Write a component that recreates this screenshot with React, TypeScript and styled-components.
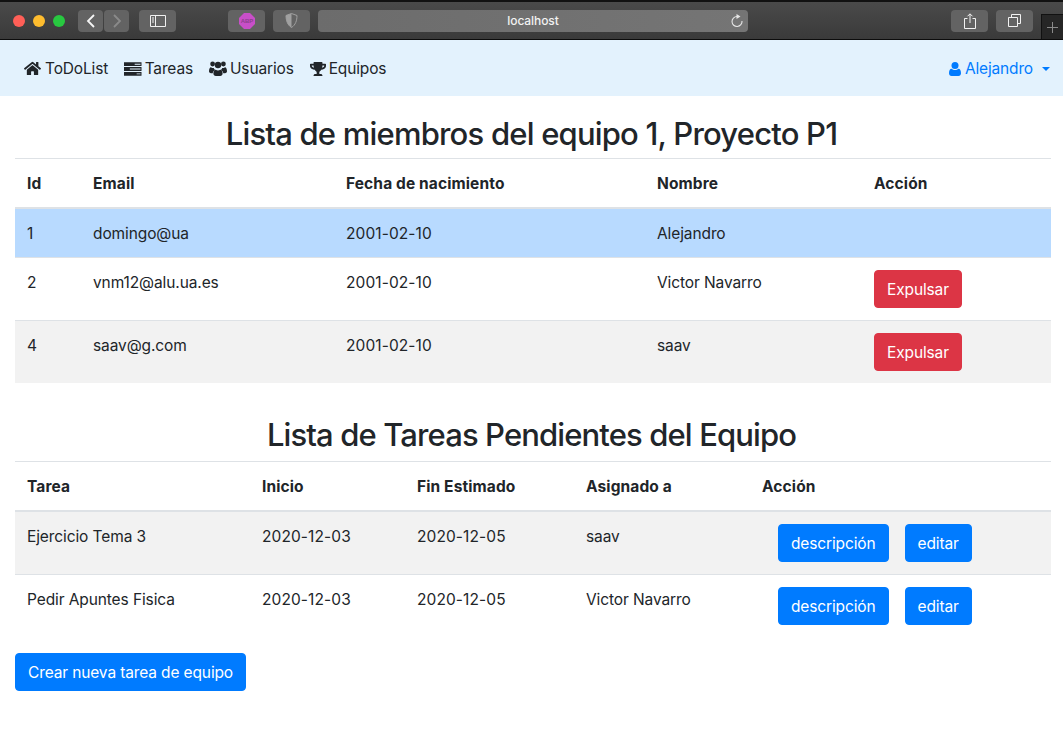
import React from 'react'
import styled, { createGlobalStyle } from 'styled-components'
import { FaHome, FaTrophy } from 'react-icons/fa'

const GlobalStyle = createGlobalStyle`
  html, body {
    margin: 0;
    padding: 0;
    background: #fff;
    font-family: Inter, "Liberation Sans", sans-serif;
    font-size: 15.5px;
    line-height: 24px;
    letter-spacing: -0.1px;
    color: #212529;
  }
  * {
    box-sizing: border-box;
  }
`

const TitleBar = styled.div`
  height: 40px;
  background: linear-gradient(#4a4a4a, #3a3a3a);
  border-top: 2px solid #111;
  border-bottom: 1px solid #0c0c0c;
  display: flex;
  align-items: center;
  padding: 0 0 0 13px;
`

const Light = styled.span<{ $color: string }>`
  width: 12px;
  height: 12px;
  border-radius: 50%;
  background: ${p => p.$color};
  margin-right: 8px;
`

const ToolButton = styled.div<{ $width: number; $left?: number }>`
  width: ${p => p.$width}px;
  height: 22px;
  margin-left: ${p => p.$left ?? 0}px;
  border-radius: 4px;
  background: #636363;
  display: flex;
  align-items: center;
  justify-content: center;
  flex-shrink: 0;
`

const AddressBar = styled(ToolButton)`
  background: linear-gradient(90deg, #6c6c6c, #757575);
  position: relative;
  color: #f2f2f2;
  font-size: 12px;
  font-weight: 500;
`

const ReloadIcon = styled.svg`
  position: absolute;
  right: 4px;
  top: 4px;
`

const BlockerText = styled.text`
  font-family: "Liberation Sans", sans-serif;
  font-size: 6px;
  font-weight: 700;
  letter-spacing: 0;
  fill: #8c3f8c;
`

const NewTab = styled.div`
  width: 22px;
  height: 25px;
  margin-left: auto;
  align-self: flex-end;
  background: #262626;
  border-left: 1px solid #111;
  border-top: 1px solid #111;
  display: flex;
  align-items: center;
  justify-content: center;
`

const Navbar = styled.nav`
  height: 56px;
  background: #e3f2fd;
  display: flex;
  align-items: center;
  justify-content: space-between;
  padding: 1px 5px 0 16px;
`

const NavLinks = styled.div`
  display: flex;
`

const NavLink = styled.a<{ $gap?: number }>`
  padding: 0 8px;
  color: #212529;
  display: flex;
  align-items: center;
  gap: ${p => p.$gap ?? 3}px;
  letter-spacing: -0.15px;
  svg {
    font-size: 17px;
    flex-shrink: 0;
  }
`

const TrophyLink = styled(NavLink)`
  svg {
    font-size: 16px;
  }
`

const UserMenu = styled(NavLink)`
  color: #007bff;
  &::after {
    content: '';
    margin-left: 5px;
    border-top: 4.8px solid #007bff;
    border-left: 4.8px solid transparent;
    border-right: 4.8px solid transparent;
  }
`

const Content = styled.main`
  padding: 0 12px 0 15px;
`

const Heading = styled.h2`
  margin: 0;
  height: 62px;
  padding: 19px 3px 0 0;
  font-size: 31px;
  line-height: 38px;
  letter-spacing: -0.8px;
  font-weight: 500;
  text-align: center;
`

const SecondHeading = styled(Heading)`
  margin-top: 16px;
  padding-top: 17px;
  letter-spacing: -0.88px;
`

const Table = styled.table`
  width: 100%;
  border-collapse: collapse;
  table-layout: fixed;
`

const Th = styled.th<{ $width: number }>`
  width: ${p => p.$width}px;
  padding: 13px 12px 11px;
  text-align: left;
  font-weight: 700;
  font-size: 15.5px;
  letter-spacing: 0.12px;
  border-top: 1px solid #dee2e6;
  border-bottom: 2px solid #dee2e6;
`

const Row = styled.tr<{ $kind?: 'primary' | 'striped' }>`
  background: ${p => (p.$kind === 'primary' ? '#b8daff' : p.$kind === 'striped' ? '#f2f2f2' : 'transparent')};
`

const Td = styled.td`
  padding: 13px 12px 11px;
  vertical-align: top;
  border-top: 1px solid #dee2e6;
`

const DateCell = styled(Td)`
  letter-spacing: 0.1px;
`

const ButtonCell = styled(Td)`
  padding: 12px;
`

const Button = styled.button<{ $variant: 'danger' | 'primary' }>`
  display: block;
  font-family: inherit;
  font-size: 15.5px;
  line-height: 24px;
  letter-spacing: -0.13px;
  font-weight: 400;
  padding: 7px 12px 5px;
  border: 1px solid ${p => (p.$variant === 'danger' ? '#dc3545' : '#007bff')};
  border-radius: 4px;
  background: ${p => (p.$variant === 'danger' ? '#dc3545' : '#007bff')};
  color: #fff;
`

const ActionGroup = styled.div`
  display: flex;
  gap: 16px;
  padding-left: 16px;
`

const CreateButton = styled(Button)`
  margin-top: 16px;
`

// font awesome 4 glyphs, the packaged ones are drawn differently
const TasksIcon = () => (
  <svg width="17.500" height="14" viewBox="0 0 18 14">
    <path
      fillRule="evenodd"
      d="M0 0h18v4H0zM11 1.500v1h6v-1zM0 5h18v4H0zM6 6.500v1h11v-1zM0 10h18v4H0zM13 11.500v1h4v-1z"
      fill="currentColor"
    />
  </svg>
)

const UsersIcon = () => (
  <svg width="18" height="15" viewBox="0 0 18 15">
    <g fill="currentColor">
      <circle cx="3.600" cy="3" r="2.400" />
      <circle cx="14.400" cy="3" r="2.400" />
      <circle cx="9" cy="4" r="3.200" />
      <path d="M0 10.500C0 7.800.8 6.200 2 6.200c.8.700 1.800 1 2.800.8.300 1 1 1.800 1.400 2.100-1.400.5-2.300 1.700-2.500 3.200C1.500 12.300 0 11.800 0 10.500z" />
      <path d="M18 10.500c0-2.700-.8-4.300-2-4.300-.8.700-1.800 1-2.800.8-.3 1-1 1.800-1.400 2.100 1.400.5 2.300 1.700 2.500 3.200 2.200 0 3.700-.5 3.700-1.800z" />
      <path d="M4.400 12.600c0-2.200 1-3.900 2.300-3.900 1.400 1.100 3.200 1.100 4.600 0 1.300 0 2.300 1.700 2.300 3.900 0 1.400-1 2.400-2.400 2.400H6.800c-1.400 0-2.400-1-2.400-2.400z" />
    </g>
  </svg>
)

const UserIcon = () => (
  <svg width="12" height="14" viewBox="0 0 12 14">
    <g fill="currentColor">
      <circle cx="6" cy="3.500" r="3.500" />
      <path d="M0 11.300C0 8.800.9 6.700 2.600 6.700c.9.900 2.100 1.400 3.400 1.400s2.500-.5 3.400-1.400c1.700 0 2.600 2.100 2.600 4.600 0 1.600-1 2.700-2.500 2.700h-7C1 14 0 12.900 0 11.300z" />
    </g>
  </svg>
)

const members = [
  { id: 2, email: 'vnm12@alu.ua.es', name: 'Victor Navarro', kind: undefined },
  { id: 4, email: 'saav@g.com', name: 'saav', kind: 'striped' as const },
]

const tasks = [
  { title: 'Ejercicio Tema 3', who: 'saav', kind: 'striped' as const },
  { title: 'Pedir Apuntes Fisica', who: 'Victor Navarro', kind: undefined },
]

const App: React.FC = () => {
  return (
    <>
      <GlobalStyle />
      <TitleBar>
        <Light $color="#ff5f57" />
        <Light $color="#febc2e" />
        <Light $color="#28c840" />
        <ToolButton $width={25} $left={5}>
          <svg width="10" height="14" viewBox="0 0 10 14"><path d="M8 1L2 7l6 6" fill="none" stroke="#f5f5f5" strokeWidth="1.8" /></svg>
        </ToolButton>
        <ToolButton $width={25} $left={1}>
          <svg width="10" height="14" viewBox="0 0 10 14"><path d="M2 1l6 6-6 6" fill="none" stroke="#8a8a8a" strokeWidth="1.8" /></svg>
        </ToolButton>
        <ToolButton $width={37} $left={10}>
          <svg width="16" height="12" viewBox="0 0 16 12"><path d="M.5.5h15v11H.5zM5.500.5v11" fill="none" stroke="#f0f0f0" /><path d="M2 3h2M2 5h2M2 7h2" stroke="#f0f0f0" /></svg>
        </ToolButton>
        <ToolButton $width={37} $left={52}>
          <svg width="16" height="16" viewBox="0 0 16 16">
            <path d="M5 0h6l5 5v6l-5 5H5l-5-5V5z" fill="#c84fc8" />
            <BlockerText x="8" y="10.200" textAnchor="middle">ABP</BlockerText>
          </svg>
        </ToolButton>
        <ToolButton $width={37} $left={8}>
          <svg width="13" height="15" viewBox="0 0 13 15"><path d="M6.500.5L12 2.500c0 5-1.500 9.500-5.500 12C2.500 12 1 7.500 1 2.500z" fill="none" stroke="#a0a0a0" /><path d="M6.500.5L1 2.500c0 5 1.500 9.500 5.500 12z" fill="#a0a0a0" /></svg>
        </ToolButton>
        <AddressBar $width={430} $left={8}>
          localhost
          <ReloadIcon width="14" height="14" viewBox="0 0 14 14">
            <path d="M7 2.500A5 5 0 1 0 12 7" fill="none" stroke="#e6e6e6" strokeWidth="1.1" />
            <path d="M6.500 0l4 2.500-4 2.500z" fill="#e6e6e6" />
          </ReloadIcon>
        </AddressBar>
        <ToolButton $width={37} $left={203}>
          <svg width="12" height="16" viewBox="0 0 12 16"><path d="M3.500 5.500H.5v10h11v-10h-3M6 10V1M3.500 3.300L6 .8l2.500 2.500" fill="none" stroke="#f2f2f2" /></svg>
        </ToolButton>
        <ToolButton $width={37} $left={8}>
          <svg width="13" height="13" viewBox="0 0 13 13"><path d="M.5 3.500h9v9h-9zM3.500 3.500v-3h9v9h-3" fill="none" stroke="#f2f2f2" /></svg>
        </ToolButton>
        <NewTab>
          <svg width="11" height="11" viewBox="0 0 11 11"><path d="M5.500 0v11M0 5.500h11" stroke="#8a8a8a" /></svg>
        </NewTab>
      </TitleBar>
      <Navbar>
        <NavLinks>
          <NavLink $gap={4}><FaHome />ToDoList</NavLink>
          <NavLink><TasksIcon />Tareas</NavLink>
          <NavLink><UsersIcon />Usuarios</NavLink>
          <TrophyLink><FaTrophy />Equipos</TrophyLink>
        </NavLinks>
        <UserMenu $gap={4}><UserIcon />Alejandro</UserMenu>
      </Navbar>
      <Content>
        <Heading>Lista de miembros del equipo 1, Proyecto P1</Heading>
        <Table>
          <thead>
            <tr>
              <Th $width={66}>Id</Th>
              <Th $width={253}>Email</Th>
              <Th $width={311}>Fecha de nacimiento</Th>
              <Th $width={217}>Nombre</Th>
              <Th $width={189}>Acción</Th>
            </tr>
          </thead>
          <tbody>
            <Row $kind="primary">
              <Td>1</Td>
              <Td>domingo@ua</Td>
              <DateCell>2001-02-10</DateCell>
              <Td>Alejandro</Td>
              <Td />
            </Row>
            {members.map(m => (
              <Row key={m.id} $kind={m.kind}>
                <Td>{m.id}</Td>
                <Td>{m.email}</Td>
                <DateCell>2001-02-10</DateCell>
                <Td>{m.name}</Td>
                <ButtonCell><Button $variant="danger">Expulsar</Button></ButtonCell>
              </Row>
            ))}
          </tbody>
        </Table>
        <SecondHeading>Lista de Tareas Pendientes del Equipo</SecondHeading>
        <Table>
          <thead>
            <tr>
              <Th $width={235}>Tarea</Th>
              <Th $width={155}>Inicio</Th>
              <Th $width={169}>Fin Estimado</Th>
              <Th $width={176}>Asignado a</Th>
              <Th $width={301}>Acción</Th>
            </tr>
          </thead>
          <tbody>
            {tasks.map(t => (
              <Row key={t.title} $kind={t.kind}>
                <Td>{t.title}</Td>
                <DateCell>2020-12-03</DateCell>
                <DateCell>2020-12-05</DateCell>
                <Td>{t.who}</Td>
                <ButtonCell>
                  <ActionGroup>
                    <Button $variant="primary">descripción</Button>
                    <Button $variant="primary">editar</Button>
                  </ActionGroup>
                </ButtonCell>
              </Row>
            ))}
          </tbody>
        </Table>
        <CreateButton $variant="primary">Crear nueva tarea de equipo</CreateButton>
      </Content>
    </>
  )
}

export default App
